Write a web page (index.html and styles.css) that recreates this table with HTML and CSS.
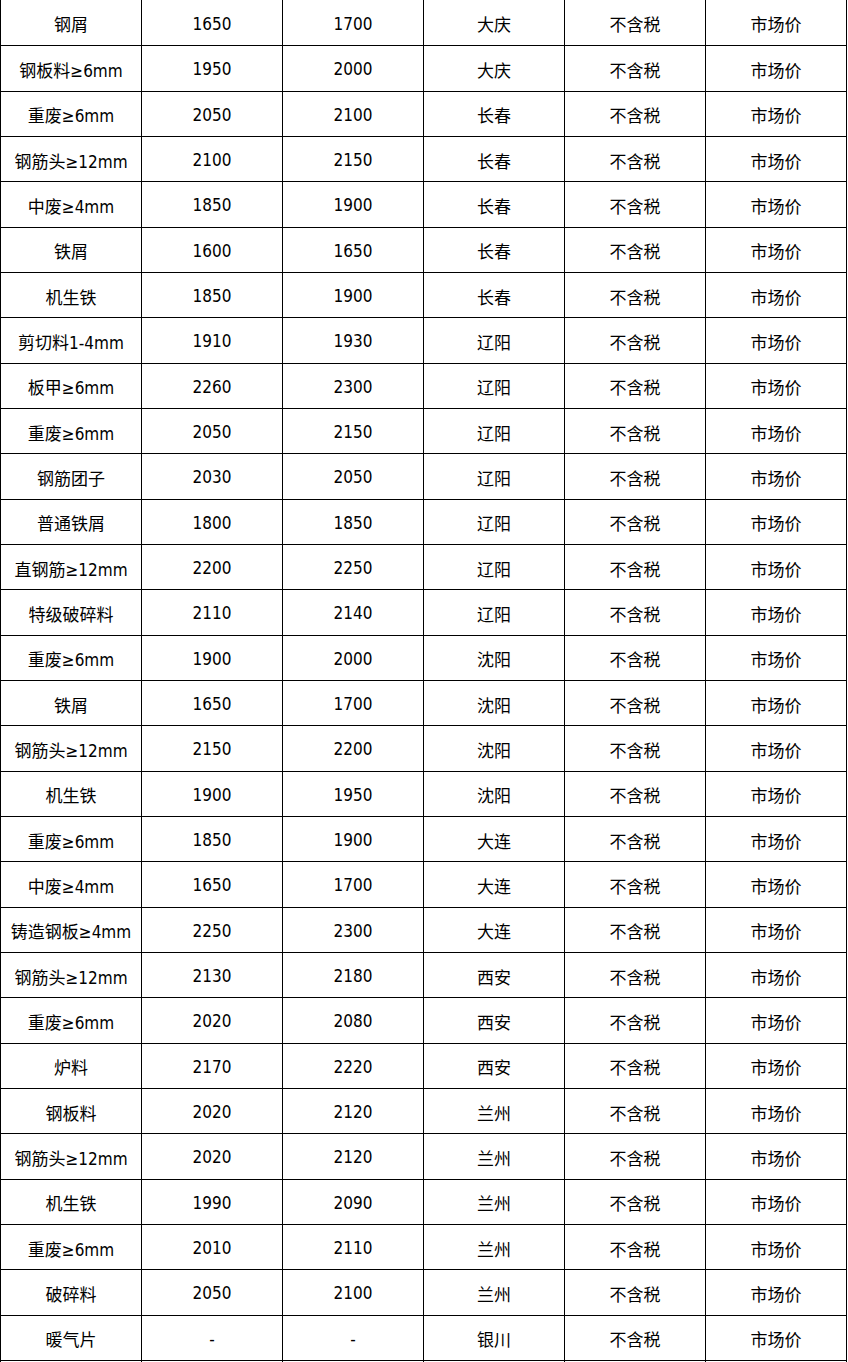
FILE: index.html
```html
<!DOCTYPE html>
<html lang="zh">
<head>
<meta charset="utf-8">
<title>废钢价格</title>
<link rel="stylesheet" href="styles.css">
</head>
<body>
<table class="price-table">
<tbody>
<tr><td>钢屑</td><td>1650</td><td>1700</td><td>大庆</td><td>不含税</td><td>市场价</td></tr>
<tr><td>钢板料≥6mm</td><td>1950</td><td>2000</td><td>大庆</td><td>不含税</td><td>市场价</td></tr>
<tr><td>重废≥6mm</td><td>2050</td><td>2100</td><td>长春</td><td>不含税</td><td>市场价</td></tr>
<tr><td>钢筋头≥12mm</td><td>2100</td><td>2150</td><td>长春</td><td>不含税</td><td>市场价</td></tr>
<tr><td>中废≥4mm</td><td>1850</td><td>1900</td><td>长春</td><td>不含税</td><td>市场价</td></tr>
<tr><td>铁屑</td><td>1600</td><td>1650</td><td>长春</td><td>不含税</td><td>市场价</td></tr>
<tr><td>机生铁</td><td>1850</td><td>1900</td><td>长春</td><td>不含税</td><td>市场价</td></tr>
<tr><td>剪切料1-4mm</td><td>1910</td><td>1930</td><td>辽阳</td><td>不含税</td><td>市场价</td></tr>
<tr><td>板甲≥6mm</td><td>2260</td><td>2300</td><td>辽阳</td><td>不含税</td><td>市场价</td></tr>
<tr><td>重废≥6mm</td><td>2050</td><td>2150</td><td>辽阳</td><td>不含税</td><td>市场价</td></tr>
<tr><td>钢筋团子</td><td>2030</td><td>2050</td><td>辽阳</td><td>不含税</td><td>市场价</td></tr>
<tr><td>普通铁屑</td><td>1800</td><td>1850</td><td>辽阳</td><td>不含税</td><td>市场价</td></tr>
<tr><td>直钢筋≥12mm</td><td>2200</td><td>2250</td><td>辽阳</td><td>不含税</td><td>市场价</td></tr>
<tr><td>特级破碎料</td><td>2110</td><td>2140</td><td>辽阳</td><td>不含税</td><td>市场价</td></tr>
<tr><td>重废≥6mm</td><td>1900</td><td>2000</td><td>沈阳</td><td>不含税</td><td>市场价</td></tr>
<tr><td>铁屑</td><td>1650</td><td>1700</td><td>沈阳</td><td>不含税</td><td>市场价</td></tr>
<tr><td>钢筋头≥12mm</td><td>2150</td><td>2200</td><td>沈阳</td><td>不含税</td><td>市场价</td></tr>
<tr><td>机生铁</td><td>1900</td><td>1950</td><td>沈阳</td><td>不含税</td><td>市场价</td></tr>
<tr><td>重废≥6mm</td><td>1850</td><td>1900</td><td>大连</td><td>不含税</td><td>市场价</td></tr>
<tr><td>中废≥4mm</td><td>1650</td><td>1700</td><td>大连</td><td>不含税</td><td>市场价</td></tr>
<tr><td>铸造钢板≥4mm</td><td>2250</td><td>2300</td><td>大连</td><td>不含税</td><td>市场价</td></tr>
<tr><td>钢筋头≥12mm</td><td>2130</td><td>2180</td><td>西安</td><td>不含税</td><td>市场价</td></tr>
<tr><td>重废≥6mm</td><td>2020</td><td>2080</td><td>西安</td><td>不含税</td><td>市场价</td></tr>
<tr><td>炉料</td><td>2170</td><td>2220</td><td>西安</td><td>不含税</td><td>市场价</td></tr>
<tr><td>钢板料</td><td>2020</td><td>2120</td><td>兰州</td><td>不含税</td><td>市场价</td></tr>
<tr><td>钢筋头≥12mm</td><td>2020</td><td>2120</td><td>兰州</td><td>不含税</td><td>市场价</td></tr>
<tr><td>机生铁</td><td>1990</td><td>2090</td><td>兰州</td><td>不含税</td><td>市场价</td></tr>
<tr><td>重废≥6mm</td><td>2010</td><td>2110</td><td>兰州</td><td>不含税</td><td>市场价</td></tr>
<tr><td>破碎料</td><td>2050</td><td>2100</td><td>兰州</td><td>不含税</td><td>市场价</td></tr>
<tr><td>暖气片</td><td>-</td><td>-</td><td>银川</td><td>不含税</td><td>市场价</td></tr>
<tr><td></td><td></td><td></td><td></td><td></td><td></td></tr>
</tbody>
</table>
</body>
</html>
```

FILE: styles.css
```css
html, body {
  margin: 0;
  padding: 0;
  background: #ffffff;
}

.price-table {
  margin-top: -1px;
  width: 847px;
  table-layout: fixed;
  border-collapse: collapse;
  font-family: "DejaVu Sans Condensed", "DejaVu Sans", "Noto Sans CJK SC", sans-serif;
  font-size: 17px;
  color: #000000;
}

.price-table tr {
  height: 45.33px;
}

.price-table tr:first-child {
  height: 46.33px;
}

.price-table td {
  border: 1px solid #000000;
  padding: 2px 0 0;
  text-align: center;
  vertical-align: middle;
  white-space: nowrap;
  overflow: hidden;
}
```
